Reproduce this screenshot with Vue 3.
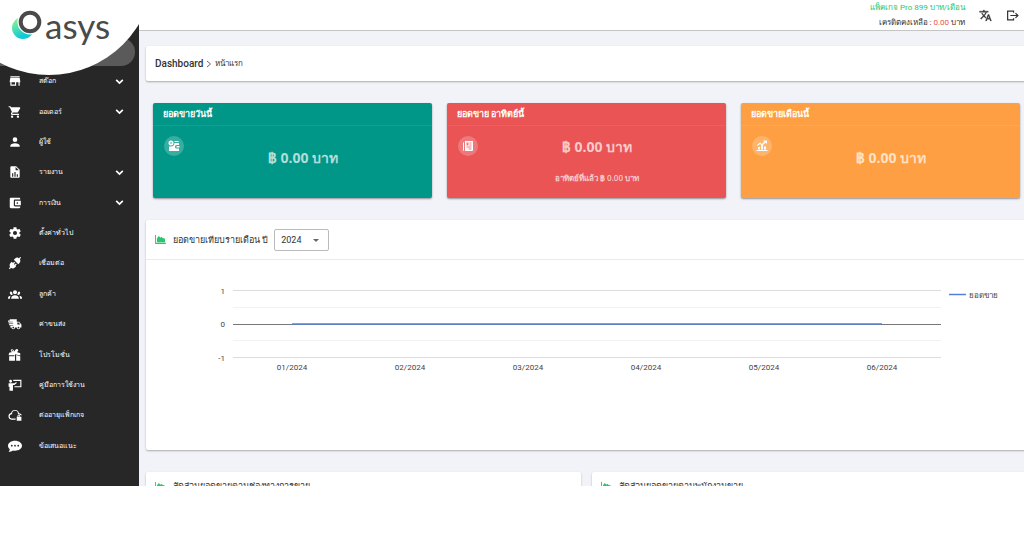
<script setup>
import { ref } from 'vue'

const year = ref('2024')

const menu = [
  { label: 'สต๊อก', icon: 'store', expandable: true },
  { label: 'ออเดอร์', icon: 'cart', expandable: true },
  { label: 'ผู้ใช้', icon: 'user' },
  { label: 'รายงาน', icon: 'report', expandable: true },
  { label: 'การเงิน', icon: 'wallet', expandable: true },
  { label: 'ตั้งค่าทั่วไป', icon: 'cog' },
  { label: 'เชื่อมต่อ', icon: 'plug' },
  { label: 'ลูกค้า', icon: 'group' },
  { label: 'ค่าขนส่ง', icon: 'truck' },
  { label: 'โปรโมชั่น', icon: 'gift' },
  { label: 'คู่มือการใช้งาน', icon: 'guide' },
  { label: 'ต่ออายุแพ็กเกจ', icon: 'cloud' },
  { label: 'ข้อเสนอแนะ', icon: 'chat' },
]

const icons = {
  store: 'M12,18H6V14H12M21,14V12L20,7H4L3,12V14H4V20H14V14H18V20H20V14M20,4H4V6H20V4Z',
  cart: 'M17,18A2,2 0 0,1 19,20A2,2 0 0,1 17,22C15.89,22 15,21.1 15,20C15,18.89 15.89,18 17,18M1,2H4.27L5.21,4H20A1,1 0 0,1 21,5C21,5.17 20.95,5.34 20.88,5.5L17.3,11.97C16.96,12.58 16.3,13 15.55,13H8.1L7.2,14.63L7.17,14.75A0.25,0.25 0 0,0 7.42,15H19V17H7C5.89,17 5,16.1 5,15C5,14.65 5.09,14.32 5.24,14.04L6.6,11.59L3,4H1V2M7,18A2,2 0 0,1 9,20A2,2 0 0,1 7,22C5.89,22 5,21.1 5,20C5,18.89 5.89,18 7,18Z',
  user: 'M12,4A4,4 0 0,1 16,8A4,4 0 0,1 12,12A4,4 0 0,1 8,8A4,4 0 0,1 12,4M12,14C16.42,14 20,15.79 20,18V20H4V18C4,15.79 7.58,14 12,14Z',
  report: 'M13,9H18.5L13,3.5V9M6,2H14L20,8V20A2,2 0 0,1 18,22H6C4.89,22 4,21.1 4,20V4C4,2.89 4.89,2 6,2M7,20H9V14H7V20M11,20H13V12H11V20M15,20H17V16H15V20Z',
  wallet: 'M21 18v1c0 1.1-.9 2-2 2H5c-1.11 0-2-.9-2-2V5c0-1.1.89-2 2-2h14c1.1 0 2 .9 2 2v1h-9c-1.11 0-2 .9-2 2v8c0 1.1.89 2 2 2h9zm-9-2h10V8H12v8zm4-2.5c-.83 0-1.5-.67-1.5-1.5s.67-1.5 1.5-1.5 1.5.67 1.5 1.5-.67 1.5-1.5 1.5z',
  cog: 'M12,15.5A3.5,3.5 0 0,1 8.5,12A3.5,3.5 0 0,1 12,8.5A3.5,3.5 0 0,1 15.5,12A3.5,3.5 0 0,1 12,15.5M19.43,12.97C19.47,12.65 19.5,12.33 19.5,12C19.5,11.67 19.47,11.34 19.43,11L21.54,9.37C21.73,9.22 21.78,8.95 21.66,8.73L19.66,5.27C19.54,5.05 19.27,4.96 19.05,5.05L16.56,6.05C16.04,5.66 15.5,5.32 14.87,5.07L14.5,2.42C14.46,2.18 14.25,2 14,2H10C9.75,2 9.54,2.18 9.5,2.42L9.13,5.07C8.5,5.32 7.96,5.66 7.44,6.05L4.95,5.05C4.73,4.96 4.46,5.05 4.34,5.27L2.34,8.73C2.21,8.95 2.27,9.22 2.46,9.37L4.57,11C4.53,11.34 4.5,11.67 4.5,12C4.5,12.33 4.53,12.65 4.57,12.97L2.46,14.63C2.27,14.78 2.21,15.05 2.34,15.27L4.34,18.73C4.46,18.95 4.73,19.03 4.95,18.95L7.44,17.94C7.96,18.34 8.5,18.68 9.13,18.93L9.5,21.58C9.54,21.82 9.75,22 10,22H14C14.25,22 14.46,21.82 14.5,21.58L14.87,18.93C15.5,18.67 16.04,18.34 16.56,17.94L19.05,18.95C19.27,19.03 19.54,18.95 19.66,18.73L21.66,15.27C21.78,15.05 21.73,14.78 21.54,14.63L19.43,12.97Z',
  plug: 'M21 1.5l1.5 1.5-2.2 2.2c1.4 2 1.2 4.8-.6 6.6L17.600 14 10 6.400l2.200-2.100c1.800-1.800 4.600-2 6.600-.6zM6.400 10l2.100 2.100 2.200-2.200 1.500 1.500-2.200 2.200 1.400 1.400 2.200-2.200 1.500 1.500-2.200 2.200 1.100 1.100-2.200 2.100c-1.800 1.800-4.600 2-6.600.6L3 22.500 1.500 21l2.200-2.200c-1.400-2-1.200-4.800.6-6.600z',
  group: 'M12 5.500a3.500 3.500 0 1 1 0 7 3.500 3.500 0 0 1 0-7M4.500 7.500a2.700 2.700 0 0 1 2.600 2c0 1.300.4 2.400 1.200 3.300a2.700 2.700 0 1 1-3.800-5.300M19.500 7.500a2.700 2.700 0 1 1-3.800 5.300c.8-.9 1.200-2 1.200-3.300a2.700 2.700 0 0 1 2.600-2M5.500 18.500c0-2.300 2.900-4.500 6.500-4.500s6.500 2.200 6.500 4.500V20h-13zM0 20v-1.500c0-1.800 1.900-3.300 4.500-3.600-.7.900-1 2.200-1 3.600V20zM24 20h-3.500v-1.500c0-1.400-.3-2.700-1-3.600 2.600.3 4.500 1.800 4.500 3.600z',
  truck: 'M3 4h12v4h4l4 5v5h-2a3 3 0 0 1-6 0h-3a3 3 0 0 1-6 0H4v-3h5v-1H2V12h7v-1H1V9h7V8H0V6h3zM16 9.500V13h5l-2.700-3.500zM9 16.500a1.500 1.500 0 1 0 0 3 1.500 1.500 0 0 0 0-3M18 16.500a1.500 1.500 0 1 0 0 3 1.500 1.500 0 0 0 0-3',
  gift: 'M2 8l5-1c-3-1-3-5 0-5 2 0 3 2 4 4 1-2 3-5 5-4 3 1 1 4-1 5l6 2v4l-9-2.500V22H2v-8h9v-1.500H1zM14 12l7 2v8h-7zM6.500 3.500c-1 1 .5 2 3 2.500-1-2-2-3-3-2.500',
  guide: 'M4.500 3a2.500 2.500 0 1 1 0 5 2.500 2.500 0 0 1 0-5M1 9h10l3-2 1.200 1.500L11 12H8.500v10H2.500v-7H1zM9 3h14v13H11v-2h10V5H9z',
  cloud: 'M6 20a5.800 5.800 0 0 1-.8-11.400A7 7 0 0 1 18.900 9h.1c2.400.3 4.200 1.600 4.800 3.500h-2.300c-.7-1.100-1.800-1.700-3.500-1.700h-1V10a5 5 0 0 0-10-.3v.8H6A3.800 3.800 0 0 0 6 18h7v2zM15 15h1.200v-1.200a2.300 2.300 0 0 1 4.600 0V15H23v7h-8zM17.600 15h2v-1.200a1 1 0 0 0-2 0z',
  chat: 'M12 3c6.600 0 12 3.700 12 8.500S18.600 20 12 20c-1.200 0-2.500-.1-3.600-.4C6 21.500 3.500 22 1 22c1.300-1.300 2-2.700 2.100-4.300C1.200 16.100 0 14 0 11.500 0 6.700 5.400 3 12 3M6.500 10a1.500 1.500 0 1 0 0 3 1.500 1.500 0 0 0 0-3M12 10a1.500 1.500 0 1 0 0 3 1.500 1.500 0 0 0 0-3M17.500 10a1.500 1.500 0 1 0 0 3 1.500 1.500 0 0 0 0-3',
  cash: 'M6 1a5 5 0 1 1 0 10A5 5 0 0 1 6 1M5 4v4h2V4zM13 2h8v2h-8zM13 6h9v4h-5a3 3 0 0 0-3 3v1a3 3 0 0 0 3 3h5v5H2v-9h4c4 0 7-3 7-7M17 12h6v3h-6z',
  news: 'M6 2h16v18a2 2 0 0 1-2 2H6zM2 5h2v17a2 2 0 0 1-2-2zM9 5v6h4V5zM15 5v2h4V5zM15 9v2h4V9zM9 13v2h10v-2zM13 17v2h6v-2z',
  growth: 'M1 20h22v2H1zM4 14h4v5H4zM10 10h4v9h-4zM16 13h4v6h-4zM2 10l6-5 4 3 5-5h-2V1h7v6h-2V5l-8 6-4-3-5 4z',
}

const cards = [
  { title: 'ยอดขายวันนี้', icon: 'cash', tone: 'teal' },
  { title: 'ยอดขาย อาทิตย์นี้', icon: 'news', tone: 'red', note: 'อาทิตย์ที่แล้ว ฿ 0.00 บาท' },
  { title: 'ยอดขายเดือนนี้', icon: 'growth', tone: 'orange' },
]

const months = ['01/2024', '02/2024', '03/2024', '04/2024', '05/2024', '06/2024']
const panels = ['สัดส่วนยอดขายตามช่องทางการขาย', 'สัดส่วนยอดขายตามพนักงานขาย']
</script>

<template>
  <div class="shell">
    <aside class="sidebar">
      <a class="current" href="#" aria-label="Dashboard"></a>
      <div class="brand-disc"></div>
      <div class="brand">
        <svg class="brand-mark" viewBox="0 0 34 34" aria-hidden="true">
          <defs>
            <linearGradient id="leaf" x1="0" y1="0" x2="0.5" y2="1">
              <stop offset="0.1" stop-color="#8df58a" />
              <stop offset="0.9" stop-color="#10c9d8" />
            </linearGradient>
          </defs>
          <circle cx="12" cy="20" r="11" fill="url(#leaf)" />
          <circle cx="19" cy="14" r="12.500" fill="#fff" />
          <circle cx="19" cy="14" r="9.300" fill="none" stroke="#4a4a4a" stroke-width="4" />
        </svg>
        <span class="brand-name">asys</span>
      </div>
      <nav class="menu">
        <component
          :is="item.expandable ? 'button' : 'a'"
          v-for="item in menu"
          :key="item.icon"
          class="menu-item"
          :href="item.expandable ? undefined : '#'"
          :type="item.expandable ? 'button' : undefined"
        >
          <svg class="menu-icon" viewBox="0 0 24 24" aria-hidden="true">
            <path :d="icons[item.icon]" fill="currentColor" fill-rule="evenodd" />
          </svg>
          <span class="menu-label">{{ item.label }}</span>
          <svg v-if="item.expandable" class="chevron" viewBox="0 0 10 10" aria-hidden="true">
            <path d="M2 3.500L5 6.500L8 3.500" fill="none" stroke="currentColor" stroke-width="1.500" />
          </svg>
        </component>
      </nav>
    </aside>

    <div class="page">
      <header class="topbar">
        <div class="account">
          <div class="plan">แพ็คเกจ Pro 899 บาท/เดือน</div>
          <div>เครดิตคงเหลือ : <span class="credit">0.00</span> บาท</div>
        </div>
        <button class="tool" type="button" aria-label="Language">
          <svg viewBox="0 0 24 24"><path d="M12.870,15.070L10.330,12.560L10.360,12.530C12.100,10.590 13.340,8.360 14.070,6H17V4H10V2H8V4H1V6H12.170C11.500,7.920 10.440,9.750 9,11.350C8.070,10.320 7.300,9.190 6.690,8H4.690C5.420,9.630 6.420,11.170 7.670,12.560L2.580,17.580L4,19L9,14L12.110,17.110L12.870,15.070M18.500,10H16.500L12,22H14L15.120,19H19.870L21,22H23L18.500,10M15.880,17L17.500,12.670L19.120,17H15.880Z" fill="currentColor" stroke="currentColor" stroke-width="0.600" /></svg>
        </button>
        <button class="tool" type="button" aria-label="Log out">
          <svg viewBox="0 0 24 24"><path d="M14 7V4H3v16h11v-3M8 12h13M17.500 7.500L22 12l-4.500 4.500" fill="none" stroke="currentColor" stroke-width="2.200" /></svg>
        </button>
      </header>

      <main class="content">
        <nav class="crumbs" aria-label="Breadcrumb">
          <a class="crumb-root" href="#">Dashboard</a>
          <svg class="crumb-arrow" viewBox="0 0 6 8" aria-hidden="true"><path d="M1 1l3.500 3L1 7" fill="none" stroke="#666" /></svg>
          <span>หน้าแรก</span>
        </nav>

        <section class="cards">
          <article v-for="card in cards" :key="card.tone" class="card" :class="card.tone">
            <h2 class="card-title">{{ card.title }}</h2>
            <div class="card-body">
              <span class="card-badge">
                <svg viewBox="0 0 24 24" aria-hidden="true"><path :d="icons[card.icon]" fill="currentColor" fill-rule="evenodd" /></svg>
              </span>
              <div class="card-values">
                <strong class="amount">฿ 0.00 บาท</strong>
                <span v-if="card.note" class="note">{{ card.note }}</span>
              </div>
            </div>
          </article>
        </section>

        <section class="panel chart-panel">
          <div class="panel-head">
            <svg class="area-icon" viewBox="0 0 12 10" aria-hidden="true"><path d="M0 0h1v8.500h11V10H0zM2 8V4l2-3 2 2 1-1 2 2 1-1 1 2v3z" fill="#28c76f" /></svg>
            <label for="year">ยอดขายเทียบรายเดือน ปี</label>
            <span class="select-wrap">
              <select id="year" v-model="year" class="year">
                <option>2024</option>
                <option>2023</option>
              </select>
            </span>
          </div>
          <svg class="chart" viewBox="0 0 881 190" role="img" aria-label="ยอดขาย">
            <path d="M87 30.500H795M87 97.500H795" stroke="#dcdcdc" />
            <path d="M87 47.500H795M87 80.500H795" stroke="#f2f2f2" />
            <path d="M87 64.500H795" stroke="#777" />
            <path d="M146 64H736" stroke="#5580dd" stroke-width="1.500" />
            <g class="axis" text-anchor="end">
              <text x="79" y="34">1</text>
              <text x="79" y="67">0</text>
              <text x="79" y="101">-1</text>
            </g>
            <g class="axis" text-anchor="middle">
              <text v-for="(month, i) in months" :key="month" :x="146 + i * 118" y="110">{{ month }}</text>
            </g>
            <path d="M803 34.500H820" stroke="#5580dd" stroke-width="1.500" />
            <text class="axis" x="823" y="38">ยอดขาย</text>
          </svg>
        </section>

        <section class="split">
          <article v-for="title in panels" :key="title" class="panel">
            <div class="panel-head short">
              <svg class="area-icon" viewBox="0 0 12 10" aria-hidden="true"><path d="M0 0h1v8.500h11V10H0zM2 8V4l2-3 2 2 1-1 2 2 1-1 1 2v3z" fill="#28c76f" /></svg>
              <span>{{ title }}</span>
            </div>
          </article>
        </section>
      </main>
    </div>
  </div>
</template>

<style>
body {
  margin: 0;
  background: #fff;
}
</style>

<style scoped>
.shell {
  display: flex;
  height: calc(100vh - 50px);
  overflow: hidden;
  background: #f2f3f8;
  color: #333;
  font: 8px/12px Roboto, "Noto Sans", sans-serif;
}
a {
  color: inherit;
  text-decoration: none;
}
button {
  padding: 0;
  border: 0;
  background: none;
  color: inherit;
  font: inherit;
}
svg {
  display: block;
}
.sidebar {
  position: relative;
  flex: 0 0 139px;
  overflow: hidden;
  background: #272727;
  color: #fff;
}
.current {
  display: block;
  height: 28px;
  margin: 38px 4px 0 0;
  border-radius: 0 14px 14px 0;
  background: #5a5a5a;
}
.brand-disc {
  position: absolute;
  top: -135px;
  left: -56px;
  width: 210px;
  height: 210px;
  border-radius: 50%;
  background: #fff;
}
.brand {
  position: absolute;
  top: 8px;
  left: 11px;
  display: flex;
  align-items: center;
  color: #4a4a4a;
}
.brand-mark {
  width: 34px;
  height: 34px;
}
.brand-name {
  font: 35px/34px Lato, sans-serif;
}
.menu {
  display: grid;
  grid-auto-rows: 1fr;
  height: 395px;
}
.menu-item {
  display: flex;
  align-items: center;
  width: 100%;
  box-sizing: border-box;
  padding: 0 14px 0 8px;
  font-size: 7px;
  font-weight: 500;
  text-align: left;
}
.menu-icon {
  width: 14px;
  height: 14px;
  margin-right: 17px;
}
.menu-label {
  flex: 1;
}
.chevron {
  width: 11px;
  height: 11px;
}
.page {
  display: flex;
  flex: 1;
  flex-direction: column;
  min-width: 0;
  overflow: hidden;
}
.topbar {
  display: flex;
  flex: 0 0 30px;
  align-items: center;
  justify-content: flex-end;
  gap: 14px;
  padding-right: 5px;
  border-bottom: 1px solid #c4c4c6;
  background: #fff;
}
.account {
  text-align: right;
  line-height: 15px;
}
.plan {
  color: #28c76f;
}
.credit {
  color: #ea5455;
}
.tool svg {
  width: 13px;
  height: 13px;
}
.content {
  display: flex;
  flex-direction: column;
  gap: 22px;
  margin-right: -3px;
  padding: 15px 0 0 7px;
}
.crumbs,
.panel {
  border-radius: 2px;
  background: #fff;
  box-shadow: 0 1px 2px rgba(0, 0, 0, 0.3);
}
.crumbs {
  display: flex;
  align-items: center;
  gap: 3px;
  height: 35px;
  padding-left: 9px;
}
.crumb-root {
  font-size: 10px;
  font-weight: 500;
}
.crumb-arrow {
  width: 6px;
  height: 8px;
}
.cards {
  display: grid;
  grid-template-columns: repeat(3, 1fr);
  gap: 15px;
  padding: 0 7px;
}
.card {
  height: 95px;
  border-radius: 2px;
  box-shadow: 0 1px 2px rgba(0, 0, 0, 0.4);
  color: #fff;
  font-family: "Open Sans", "Noto Sans", sans-serif;
}
.teal {
  background: #009688;
}
.red {
  background: #ea5455;
}
.orange {
  background: #ff9f43;
}
.card-title {
  height: 22px;
  margin: 0;
  padding-left: 10px;
  border-bottom: 1px solid rgba(255, 255, 255, 0.08);
  font-size: 9px;
  font-weight: 600;
  line-height: 22px;
}
.card-body {
  display: grid;
  grid-template-columns: 20px 1fr;
  height: 72px;
  padding: 0 0 0 11px;
}
.card-badge {
  display: grid;
  place-items: center;
  width: 20px;
  height: 20px;
  margin-top: 10px;
  border-radius: 50%;
  background: rgba(255, 255, 255, 0.22);
}
.card-badge svg {
  width: 12px;
  height: 12px;
}
.card-values {
  display: flex;
  flex-direction: column;
  align-items: center;
  gap: 15px;
  padding: 22px 10px 0 0;
  color: rgba(255, 255, 255, 0.7);
}
.red .card-values {
  padding-top: 11px;
}
.amount {
  font-size: 14px;
  line-height: 20px;
}
.note {
  font-size: 8px;
  font-weight: 600;
}
.chart-panel {
  height: 230px;
}
.panel-head {
  display: flex;
  align-items: center;
  height: 39px;
  padding-left: 9px;
  border-bottom: 1px solid #ebebeb;
  font-size: 9px;
}
.short {
  height: 28px;
}
.area-icon {
  width: 11px;
  height: 9px;
  margin-right: 7px;
}
.select-wrap {
  position: relative;
  margin-left: 6px;
}
.select-wrap::after {
  position: absolute;
  top: 10px;
  right: 10px;
  border: 3px solid transparent;
  border-top-color: #666;
  border-bottom: 0;
  content: "";
}
.year {
  display: block;
  width: 55px;
  height: 22px;
  padding: 0 6px;
  border: 1px solid #bbb;
  border-radius: 2px;
  background: #fff;
  appearance: none;
  color: #333;
  font: inherit;
}
.chart {
  width: 100%;
}
.axis {
  fill: #444;
  font-size: 8px;
}
.split {
  display: grid;
  grid-template-columns: 1fr 1fr;
  gap: 11px;
}
</style>
